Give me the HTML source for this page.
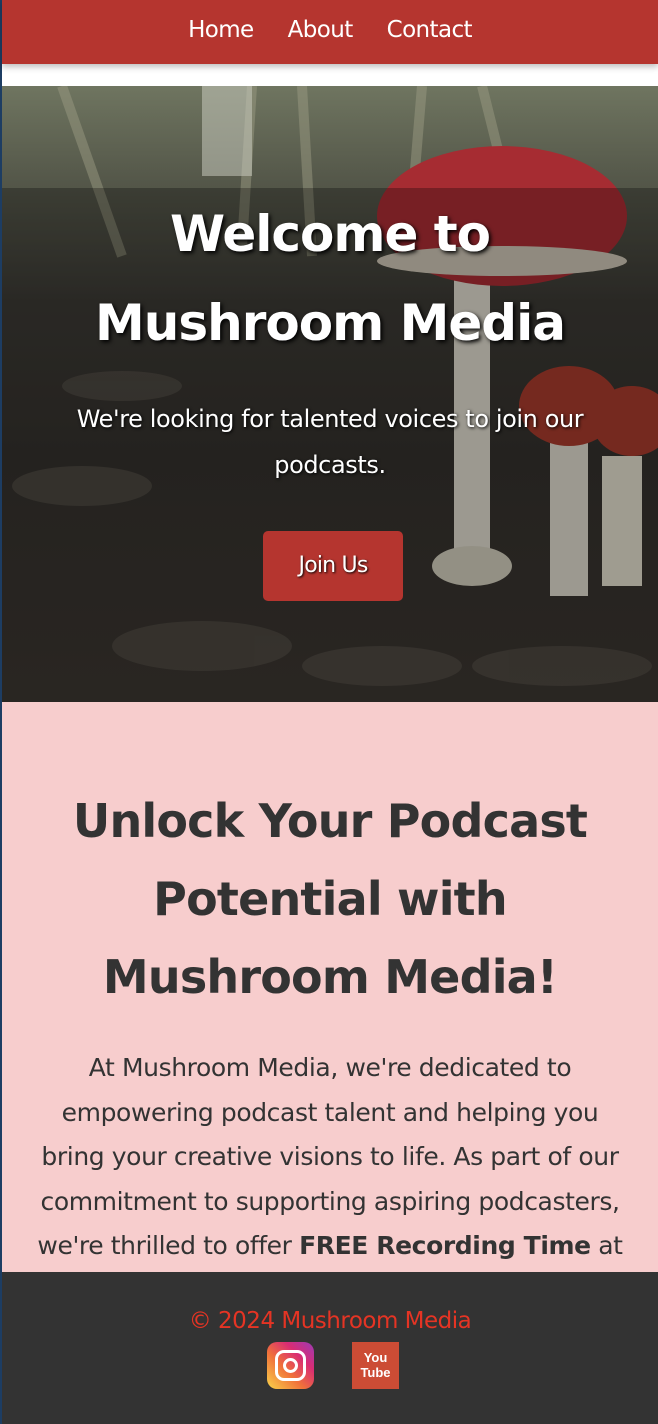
<!DOCTYPE html>
<html><head><meta charset="utf-8"><style>
*{margin:0;padding:0;box-sizing:border-box}
html,body{width:658px;height:1424px;overflow:hidden;background:#fff;font-family:"DejaVu Sans","Liberation Sans",sans-serif}
body{border-left:2px solid #1d3d63;position:relative}
nav{height:64px;background:#b5352f;box-shadow:0 3px 6px rgba(0,0,0,.25);text-align:center;position:relative;z-index:2}
nav a{color:#fff;text-decoration:none;font-size:23px;line-height:60px;margin:0 17px;letter-spacing:-.6px}
.hero{position:absolute;top:86px;left:0;width:656px;height:616px;overflow:hidden;
background:linear-gradient(180deg,#6f7560 0%,#55584a 15%,#3a3833 35%,#33302c 60%,#3a3530 100%)}
.hero .band{position:absolute;left:0;right:0;top:102px;bottom:0;background:rgba(0,0,0,.28)}
.hero h1{position:absolute;top:104px;left:0;right:0;text-align:center;color:#fff;font-size:50px;line-height:89px;font-weight:bold;letter-spacing:-1px;text-shadow:2px 2px 4px #000}
.hero p{position:absolute;top:310px;left:40px;right:40px;text-align:center;color:#fff;font-size:24px;line-height:46px;letter-spacing:-.4px;text-shadow:1px 1px 3px #000}
.btn{position:absolute;top:445px;left:261px;width:140px;height:70px;background:#b5352f;border-radius:5px;color:#fff;font-size:22px;line-height:70px;text-align:center;letter-spacing:-.8px;text-shadow:1px 1px 2px #000}
.pink{position:absolute;top:702px;left:0;width:656px;height:570px;background:#f7cdcd;text-align:center;color:#333}
.pink h2{margin-top:80px;font-size:46px;line-height:78px;font-weight:bold;padding:0 40px;letter-spacing:-.8px}
.pink p{margin-top:30px;font-size:25px;line-height:44.5px;padding:0 33px;letter-spacing:-.4px}
footer{position:absolute;top:1272px;left:0;width:656px;height:152px;background:#333;text-align:center}
footer .c{color:#e53424;font-size:23px;margin-top:36px;letter-spacing:-.5px}
.ig{position:absolute;left:265px;top:70px;width:47px;height:47px;border-radius:10px;background:linear-gradient(45deg,#f9d44a,#f0713a 40%,#d92c74 70%,#9a3bb8)}
.yt{position:absolute;left:350px;top:70px;width:47px;height:47px;background:#cc4c35;color:#fff;font:bold 13px/15px "Liberation Sans Narrow","Liberation Sans",sans-serif;padding-top:8px}
</style></head><body>
<nav><a>Home</a><a>About</a><a>Contact</a></nav>
<div class="hero">
<svg width="656" height="616" style="position:absolute;left:0;top:0">
<g opacity=".5" stroke="#9a9a82" stroke-width="10"><line x1="250" y1="0" x2="240" y2="160"/><line x1="300" y1="0" x2="310" y2="170"/><line x1="420" y1="0" x2="410" y2="120"/><line x1="480" y1="0" x2="500" y2="80"/><line x1="60" y1="0" x2="120" y2="170"/></g>
<rect x="200" y="0" width="50" height="90" fill="#cfd2c6" opacity=".5"/>
<g fill="#57524a" opacity=".6"><ellipse cx="80" cy="400" rx="70" ry="20"/><ellipse cx="200" cy="560" rx="90" ry="25"/><ellipse cx="380" cy="580" rx="80" ry="20"/><ellipse cx="120" cy="300" rx="60" ry="15"/><ellipse cx="560" cy="580" rx="90" ry="20"/></g>
<rect x="452" y="170" width="36" height="300" fill="#d8d4c8"/>
<ellipse cx="470" cy="480" rx="40" ry="20" fill="#ccc8b8"/>
<ellipse cx="500" cy="130" rx="125" ry="70" fill="#a62c32"/>
<ellipse cx="500" cy="175" rx="125" ry="15" fill="#c8c0b0"/>
<rect x="548" y="340" width="38" height="170" fill="#d8d4c8"/>
<ellipse cx="567" cy="320" rx="50" ry="40" fill="#a33a2c"/>
<rect x="600" y="370" width="40" height="130" fill="#ddd8c8"/>
<ellipse cx="630" cy="335" rx="40" ry="35" fill="#a33a2c"/>
</svg>
<div class="band"></div>
<h1>Welcome to<br>Mushroom Media</h1>
<p>We're looking for talented voices to join our podcasts.</p>
<div class="btn">Join Us</div>
</div>
<div class="pink">
<h2>Unlock Your Podcast Potential with Mushroom Media!</h2>
<p>At Mushroom Media, we're dedicated to empowering podcast talent and helping you<br>bring your creative visions to life. As part of our commitment to supporting aspiring podcasters, we're thrilled to offer <b>FREE Recording Time</b> at</p>
</div>
<footer><div class="c">© 2024 Mushroom Media</div>
<div class="ig"><div style="position:absolute;left:8px;top:8px;width:31px;height:31px;border:3px solid #fff;border-radius:9px"></div><div style="position:absolute;left:16px;top:16px;width:15px;height:15px;border:3px solid #fff;border-radius:50%"></div></div>
<div class="yt">You<br>Tube</div>
</footer>
</body></html>
